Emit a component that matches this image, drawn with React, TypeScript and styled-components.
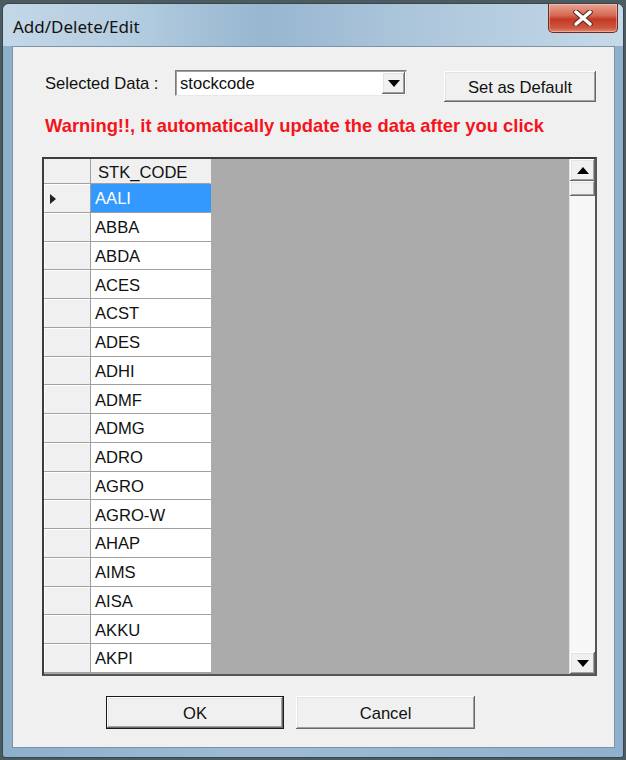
import React from "react";
import styled, { createGlobalStyle } from "styled-components";

const Global = createGlobalStyle`
  html, body {
    margin: 0;
    padding: 0;
    background: #4b5b60;
    width: 626px;
    height: 760px;
    overflow: hidden;
  }
`;

const Window = styled.div`
  margin: 3px 2px 0 2px;
  width: 622px;
  height: 755px;
  box-sizing: border-box;
  border: 1px solid #3a464d;
  border-radius: 7px 7px 3px 3px;
  background: linear-gradient(90deg, #8db0cd 0%, #9dbbd4 40%, #8fb1cd 100%);
  display: flex;
  flex-direction: column;
  padding: 0 8px 9px 9px;
`;

const TitleBar = styled.div`
  height: 42px;
  margin: 0 -8px 0 -9px;
  padding: 0 5px 0 10px;
  display: flex;
  justify-content: space-between;
  align-items: flex-start;
  border-radius: 6px 6px 0 0;
  background: linear-gradient(
    90deg,
    #c3d7e7 0%,
    #b4cde0 20%,
    #97b6d0 42%,
    #a9c3d9 62%,
    #b9d0e2 85%,
    #c6d9e8 100%
  );
`;

const Title = styled.div`
  padding-top: 12px;
  font-family: "Noto Sans", "Open Sans", sans-serif;
  font-size: 17px;
  line-height: 22px;
  color: #111;
`;

const CloseButton = styled.div`
  width: 70px;
  height: 29px;
  box-sizing: border-box;
  border: 1px solid #6b2a24;
  border-top: none;
  border-radius: 0 0 5px 5px;
  background: linear-gradient(180deg, #e7a594 0%, #d66a54 40%, #c23a26 55%, #cf5640 85%, #e08a70 100%);
  display: flex;
  align-items: center;
  justify-content: center;
  box-shadow: inset 0 0 0 1px rgba(255, 210, 200, 0.45);
`;

const Client = styled.div`
  height: 702px;
  box-sizing: border-box;
  background: #f0f0f0;
  border: 1px solid #7c93a6;
  padding: 23px 0 0 32px;
  display: flex;
  flex-direction: column;
  font-family: "Liberation Sans", Arial, sans-serif;
  font-size: 16.6px;
  color: #111;
`;

const TopRow = styled.div`
  display: flex;
  align-items: flex-start;
`;

const Label = styled.div`
  width: 130px;
  line-height: 27px;
`;

const Combo = styled.div`
  width: 232px;
  height: 26px;
  box-sizing: border-box;
  background: #fff;
  border-style: solid;
  border-width: 1px;
  border-color: #7a7a7a #e8e8e8 #e8e8e8 #7a7a7a;
  box-shadow: inset 1px 1px 0 #a0a0a0;
  display: flex;
  align-items: center;
  justify-content: space-between;
  padding: 0 1px 0 4px;
`;

const ComboText = styled.span`
  line-height: 22px;
  padding-top: 1px;
`;

const raised = `
  background: #f0f0f0;
  box-shadow: inset -1px -1px 0 #696969, inset 1px 1px 0 #ffffff,
    inset -2px -2px 0 #a0a0a0, inset 2px 2px 0 #e3e3e3;
`;

const ComboButton = styled.div`
  width: 23px;
  height: 22px;
  ${raised}
  display: flex;
  align-items: center;
  justify-content: center;
`;

const Button = styled.div<{ $w: number; $default?: boolean }>`
  width: ${(p) => p.$w}px;
  height: 31px;
  box-sizing: border-box;
  ${raised}
  border: ${(p) => (p.$default ? "1px solid #1a1a1a" : "none")};
  display: flex;
  align-items: center;
  justify-content: center;
  padding-top: 2px;
`;

const DefaultBtn = styled(Button)`
  margin: 1px 0 0 37px;
`;

const Warning = styled.div`
  margin-top: 13px;
  font-weight: bold;
  color: #f5141c;
  line-height: 22px;
  font-size: 18.4px;
  white-space: nowrap;
`;

const Grid = styled.div`
  margin: 20px 0 0 -3px;
  width: 555px;
  height: 519px;
  box-sizing: border-box;
  border: 2px solid #3c3c3c;
  border-right-color: #555;
  border-bottom-color: #555;
  display: flex;
`;

const Body = styled.div`
  flex: 1;
  background: #ababab;
  overflow: hidden;
  display: grid;
  grid-template-columns: 47px 120px;
  grid-auto-rows: 28.75px;
  grid-template-rows: 25px;
  align-content: start;
`;

const HeadCell = styled.div<{ $corner?: boolean }>`
  background: #f0f0f0;
  border-right: 1px solid ${(p) => (p.$corner ? "#a0a0a0" : "transparent")};
  border-bottom: 1px solid #a0a0a0;
  padding: 2px 0 0 7px;
  line-height: 24px;
`;

const RowHead = styled.div`
  background: #f0f0f0;
  border-right: 1px solid #a0a0a0;
  border-bottom: 1px solid #a0a0a0;
  box-shadow: inset 1px 1px 0 #fff;
  display: flex;
  align-items: center;
  padding: 2px 0 0 6px;
`;

const Cell = styled.div<{ $sel?: boolean }>`
  background: ${(p) => (p.$sel ? "#3399ff" : "#fff")};
  color: ${(p) => (p.$sel ? "#fff" : "#111")};
  border-bottom: 1px solid #a0a0a0;
  padding: 3px 0 0 4px;
  display: flex;
  align-items: center;
`;

const Scroll = styled.div`
  width: 25px;
  background: #f7f7f7;
  border-left: 1px solid #e2e2e2;
  display: flex;
  flex-direction: column;
  justify-content: space-between;
`;

const ScrollTop = styled.div`
  display: flex;
  flex-direction: column;
`;

const Arrow = styled.div`
  height: 22px;
  ${raised}
  display: flex;
  align-items: center;
  justify-content: center;
`;

const Thumb = styled.div`
  height: 15px;
  ${raised}
`;

const Footer = styled.div`
  margin: 20px 0 0 61px;
  display: flex;
  gap: 12px;
`;

const FooterBtn = styled(Button)`
  height: 33px;
`;

const Tri = ({ up }: { up?: boolean }) => (
  <svg width="12" height="7" viewBox="0 0 12 7">
    <polygon points={up ? "0,7 12,7 6,0" : "0,0 12,0 6,7"} fill="#000" />
  </svg>
);

const codes = [
  "AALI", "ABBA", "ABDA", "ACES", "ACST", "ADES", "ADHI", "ADMF", "ADMG",
  "ADRO", "AGRO", "AGRO-W", "AHAP", "AIMS", "AISA", "AKKU", "AKPI",
];

export default function App() {
  return (
    <>
      <Global />
      <Window>
        <TitleBar>
          <Title>Add/Delete/Edit</Title>
          <CloseButton>
            <svg width="22" height="16" viewBox="0 0 22 16">
              <path d="M4 2 L18 14 M18 2 L4 14" stroke="#5a2620" strokeWidth="5.5" strokeLinecap="round" />
              <path d="M4 2 L18 14 M18 2 L4 14" stroke="#fff" strokeWidth="3.5" strokeLinecap="round" />
            </svg>
          </CloseButton>
        </TitleBar>
        <Client>
          <TopRow>
            <Label>Selected Data :</Label>
            <Combo>
              <ComboText>stockcode</ComboText>
              <ComboButton>
                <Tri />
              </ComboButton>
            </Combo>
            <DefaultBtn $w={152}>Set as Default</DefaultBtn>
          </TopRow>
          <Warning>Warning!!, it automatically update the data after you click</Warning>
          <Grid>
            <Body>
              <HeadCell $corner />
              <HeadCell>STK_CODE</HeadCell>
              {codes.map((c, i) => (
                <React.Fragment key={c}>
                  <RowHead>
                    {i === 0 && (
                      <svg width="6" height="10" viewBox="0 0 6 10">
                        <polygon points="0,0 6,5 0,10" fill="#222" />
                      </svg>
                    )}
                  </RowHead>
                  <Cell $sel={i === 0}>{c}</Cell>
                </React.Fragment>
              ))}
            </Body>
            <Scroll>
              <ScrollTop>
                <Arrow>
                  <Tri up />
                </Arrow>
                <Thumb />
              </ScrollTop>
              <Arrow>
                <Tri />
              </Arrow>
            </Scroll>
          </Grid>
          <Footer>
            <FooterBtn $w={178} $default>OK</FooterBtn>
            <FooterBtn $w={179}>Cancel</FooterBtn>
          </Footer>
        </Client>
      </Window>
    </>
  );
}
